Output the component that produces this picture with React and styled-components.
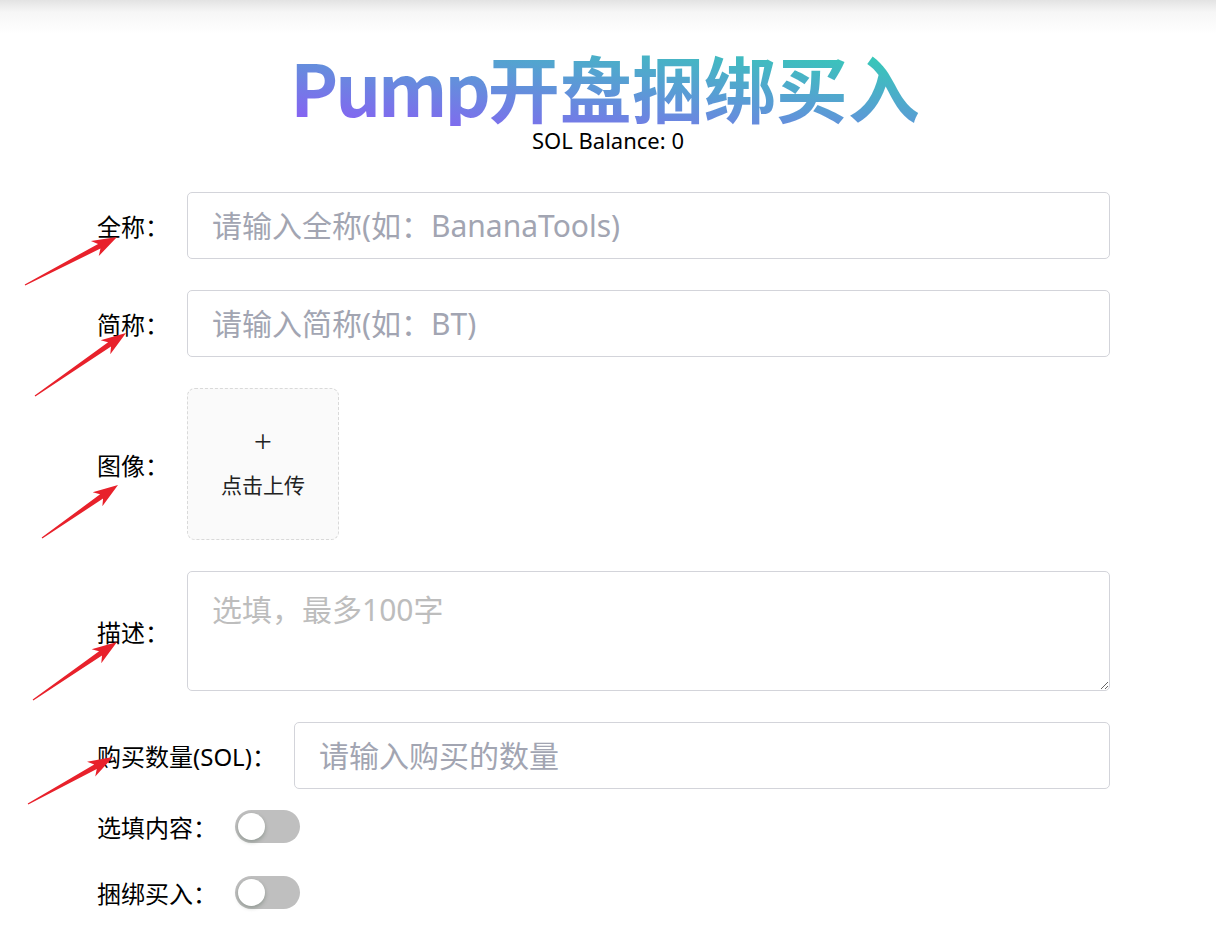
import React, { useState } from "react";
import styled, { createGlobalStyle } from "styled-components";

const GlobalStyle = createGlobalStyle`
  html, body {
    margin: 0;
    padding: 0;
    background: #fff;
    font-family: "Noto Sans", "Noto Sans CJK SC", sans-serif;
    color: #000;
  }
`;

// annotation arrows drawn on top of the screenshot: [tailX, tailY, tipX, tipY]
const arrows = [
  [25, 285, 117, 237],
  [35, 396, 126, 333],
  [42, 538, 118, 485],
  [33, 700, 117, 642],
  [28, 804, 113, 757],
];

function Arrow({ x1, y1, x2, y2 }) {
  const dx = x2 - x1;
  const dy = y2 - y1;
  const L = Math.sqrt(dx * dx + dy * dy);
  const angle = (Math.atan2(dy, dx) * 180) / Math.PI;
  const pts = [
    [0, -0.6],
    [L - 20, -2.6],
    [L - 25, -8.5],
    [L, 0],
    [L - 25, 8.5],
    [L - 20, 2.6],
    [0, 0.6],
  ]
    .map((p) => p.join(","))
    .join(" ");
  return (
    <g transform={`translate(${x1} ${y1}) rotate(${angle})`}>
      <polygon points={pts} fill="#e8212b" />
    </g>
  );
}

function App() {
  const [optional, setOptional] = useState(false);
  const [bundle, setBundle] = useState(false);

  return (
    <Page>
      <GlobalStyle />
      <TopShade />
      <Header>
        <Title>
          <Latin>Pump</Latin>开盘捆绑买入
        </Title>
        <Balance>SOL Balance: 0</Balance>
      </Header>
      <Form>
        <Row>
          <Label>全称：</Label>
          <Input placeholder="请输入全称(如：BananaTools)" />
        </Row>
        <Row>
          <Label>简称：</Label>
          <Input placeholder="请输入简称(如：BT)" />
        </Row>
        <Row>
          <Label>图像：</Label>
          <Upload>
            <Plus>+</Plus>
            <UploadText>点击上传</UploadText>
          </Upload>
        </Row>
        <Row>
          <Label>描述：</Label>
          <TextArea placeholder="选填，最多100字" />
        </Row>
        <Row>
          <Label>购买数量(SOL)：</Label>
          <Input placeholder="请输入购买的数量" />
        </Row>
        <SwitchRow>
          <Label>选填内容：</Label>
          <Switch $on={optional} onClick={() => setOptional(!optional)}>
            <Knob $on={optional} />
          </Switch>
        </SwitchRow>
        <SwitchRow>
          <Label>捆绑买入：</Label>
          <Switch $on={bundle} onClick={() => setBundle(!bundle)}>
            <Knob $on={bundle} />
          </Switch>
        </SwitchRow>
      </Form>
      <Overlay width="1216" height="928" viewBox="0 0 1216 928">
        {arrows.map((a, i) => (
          <Arrow key={i} x1={a[0]} y1={a[1]} x2={a[2]} y2={a[3]} />
        ))}
      </Overlay>
    </Page>
  );
}

const Page = styled.div`
  position: relative;
  width: 1216px;
  min-height: 928px;
  overflow: hidden;
`;

const TopShade = styled.div`
  height: 34px;
  background: linear-gradient(#e3e3e3, #f6f6f6 35%, #ffffff);
`;

const Header = styled.div`
  display: flex;
  flex-direction: column;
  align-items: center;
  margin-top: 12px;
`;

const Title = styled.h1`
  margin: 0 6px 0 0;
  font-family: "Noto Sans CJK SC", sans-serif;
  font-weight: 700;
  font-size: 72px;
  line-height: 80px;
  background: linear-gradient(to top right, #8b5cf6, #5b9ad6 50%, #2dd4b0);
  -webkit-background-clip: text;
  background-clip: text;
  color: transparent;
`;

const Latin = styled.span`
  letter-spacing: -3px;
`;

const Balance = styled.div`
  font-size: 22px;
  line-height: 26px;
  margin-top: 1px;
`;

const Form = styled.div`
  width: 1013px;
  margin: 39px 0 0 97px;
  display: flex;
  flex-direction: column;
  gap: 31px;
`;

const Row = styled.div`
  display: flex;
  align-items: center;
`;

const SwitchRow = styled(Row)`
  margin-top: -10px;
  height: 33px;
  & + & {
    margin-top: 2px;
  }
`;

const Label = styled.label`
  font-family: "Noto Sans", "Noto Sans CJK SC", sans-serif;
  font-size: 24px;
  color: #000;
  white-space: nowrap;
  margin-right: 18px;
`;

const Input = styled.input`
  flex: 1;
  height: 67px;
  box-sizing: border-box;
  border: 1px solid #d3d4da;
  border-radius: 5px;
  padding: 0 24px;
  font-family: "Noto Sans", "Noto Sans CJK SC", sans-serif;
  font-size: 30px;
  outline: none;
  &::placeholder {
    color: #a2a5b2;
  }
`;

const TextArea = styled.textarea`
  flex: 1;
  height: 120px;
  box-sizing: border-box;
  border: 1px solid #d3d4da;
  border-radius: 5px;
  padding: 14px 24px;
  font-family: "Noto Sans", "Noto Sans CJK SC", sans-serif;
  font-size: 30px;
  outline: none;
  resize: vertical;
  &::placeholder {
    color: #bdbdbd;
  }
`;

const Upload = styled.div`
  width: 152px;
  height: 152px;
  box-sizing: border-box;
  border: 1px dashed #d9d9d9;
  border-radius: 8px;
  background: #fafafa;
  display: flex;
  flex-direction: column;
  align-items: center;
  justify-content: center;
  color: #222;
  cursor: pointer;
`;

const Plus = styled.div`
  font-size: 32px;
  line-height: 32px;
  font-weight: 300;
  margin-top: -4px;
`;

const UploadText = styled.div`
  font-family: "Noto Sans CJK SC", sans-serif;
  font-size: 21px;
  margin-top: 12px;
`;

const Switch = styled.button`
  position: relative;
  width: 65px;
  height: 33px;
  border: none;
  border-radius: 17px;
  padding: 0;
  background: ${(p) => (p.$on ? "#1677ff" : "#bfbfbf")};
  cursor: pointer;
`;

const Knob = styled.span`
  position: absolute;
  top: 3px;
  left: ${(p) => (p.$on ? "35px" : "3px")};
  width: 27px;
  height: 27px;
  border-radius: 50%;
  background: #fff;
  box-shadow: 0 2px 4px rgba(0, 35, 11, 0.25);
`;

const Overlay = styled.svg`
  position: absolute;
  top: 0;
  left: 0;
  pointer-events: none;
`;

export default App;
